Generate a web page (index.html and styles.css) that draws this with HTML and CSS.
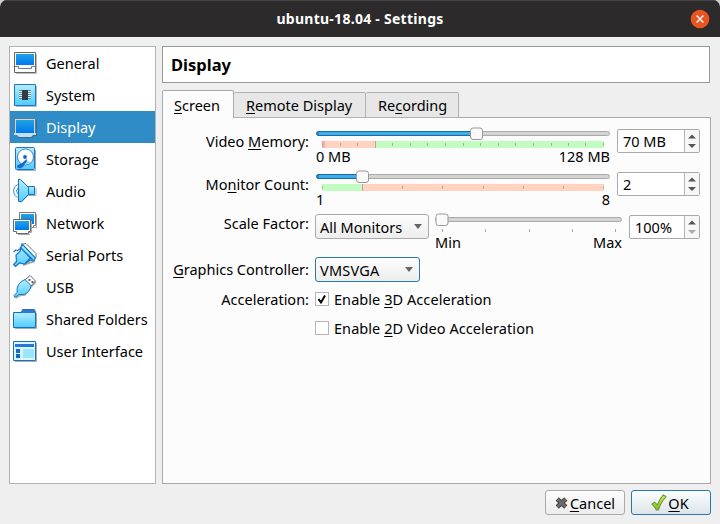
FILE: index.html
```
<!DOCTYPE html>
<html lang="en">
<head>
<meta charset="utf-8">
<title>ubuntu-18.04 - Settings</title>
<link rel="stylesheet" href="styles.css">
</head>
<body>
<svg width="0" height="0" class="defs" aria-hidden="true">
  <defs>
    <linearGradient id="screen" x1="0" y1="0" x2="0" y2="1"><stop offset="0" stop-color="#20a4e2"/><stop offset="1" stop-color="#0077f0"/></linearGradient>
    <linearGradient id="cyan" x1="0" y1="0" x2="0" y2="1"><stop offset="0" stop-color="#b5edff"/><stop offset="1" stop-color="#50cdfc"/></linearGradient>
    <linearGradient id="tick" x1="0" y1="0" x2="0" y2="1"><stop offset="0" stop-color="#d4ee55"/><stop offset="1" stop-color="#83b81b"/></linearGradient>
  </defs>
</svg>
<div class="window">
  <header class="titlebar">
    <h1>ubuntu-18.04 - Settings</h1>
    <svg class="close" width="20" height="20" viewBox="0 0 20 20"><circle cx="10" cy="10" r="9.3" fill="#e95420"/><path d="M6.6 6.6l6.8 6.8M13.4 6.6l-6.8 6.8" stroke="#fff" stroke-width="1.4"/></svg>
  </header>
  <main class="content">
    <nav class="sidebar">
      <a class="item"><svg class="icon" viewBox="0 0 24 24"><path d="M3 22.5h20.5V3" fill="none" stroke="#bbb"/><path d="M1.500 1.500h21v20h-21z" fill="#fff" stroke="#666"/><path d="M3 3h18v11H3z" fill="url(#screen)"/><path d="M2 15.500h3.500v2h13v-2H22" fill="none" stroke="#777"/></svg><span>General</span></a>
      <a class="item"><svg class="icon" viewBox="0 0 24 24"><path d="M3 23.5h20.5V3" fill="none" stroke="#bbb"/><path d="M1.5 1.5h21v21h-21z" fill="url(#cyan)" stroke="#1675cf"/><path d="M6 7.5h12M6 9.500h12M6 11.500h12M6 13.500h12M6 15.500h12" stroke="#4992b5"/><path d="M6 8.500h12M6 10.500h12M6 12.500h12M6 14.500h12" stroke="#e8faff"/><path d="M9 7h6v10H9z" fill="#343a44"/></svg><span>System</span></a>
      <a class="item selected"><svg class="icon" viewBox="0 0 24 24"><path d="M5 22.500h15v-2h3.500V5" fill="none" stroke="#286f9f"/><path d="M1.500 3.500h21v16h-3l-1 2h-13l-1-2h-3z" fill="#b9d9ed" stroke="#607a8d"/><path d="M1 18h22v2h-3l-2 2H6l-2-2H1z" fill="#c3dff0"/><path d="M3 5h18v13H3z" fill="url(#screen)"/></svg><span>Display</span></a>
      <a class="item"><svg class="icon" viewBox="0 0 24 24"><path d="M4 23.5h18.5V3" fill="none" stroke="#aaa"/><rect x="2.5" y=".5" width="19" height="22" rx="1" fill="url(#cyan)" stroke="#1675cf"/><circle cx="12.500" cy="10" r="8" fill="#fff" stroke="#1769bd" stroke-width=".8"/><path d="M12 18l5-2.500-3-2z" fill="#83d9fa"/><circle cx="12" cy="10" r="1.900" fill="#1064ce"/><path d="M13.500 12l.5 2-4 6-3 1.500-3-1 .5-2.500 4-1.500z" fill="#176bd0"/></svg><span>Storage</span></a>
      <a class="item"><svg class="icon" viewBox="0 0 24 24"><path d="M8 23.500l7-7h8V9" fill="none" stroke="#aaa"/><path d="M4.500 5.500Q.5 7 .5 12t4 6.500M5 9Q2 12 5 15" fill="none" stroke="#3190df"/><path d="M5.500.5h2l8 8v7l-7 7h-3z" fill="url(#cyan)" stroke="#1571ce"/><path d="M15.500 7.500h6v8h-6z" fill="url(#cyan)" stroke="#1571ce"/></svg><span>Audio</span></a>
      <a class="item"><svg class="icon" viewBox="0 0 24 24"><path d="M6.500 1.500h16v13h-2v2h-12l-2-3z" fill="#fff" stroke="#777"/><path d="M8 3h13v10H8z" fill="url(#screen)"/><path d="M3 21.500h15.500V10M5 23.500h12M21 16.500h2.500V3" fill="none" stroke="#aaa"/><path d="M.5 8.500h17v12h-2v2h-12v-2h-3z" fill="#fff" stroke="#686868"/><path d="M2 10h14v9H2z" fill="url(#screen)"/></svg><span>Network</span></a>
      <a class="item"><svg class="icon" viewBox="0 0 24 24"><path d="M10 1l3-.5 10 10v4" fill="#fff" stroke="#777"/><path d="M10 22l12-4" stroke="#aaa" stroke-width="2"/><path d="M9 .8L22.500 15l-2 3-3-1-6 4-5-1-4 3.500-2-2 3-3-.5-6.500 4-3.500z" fill="url(#cyan)" stroke="#1975c9" stroke-width="1.200"/><path d="M7 4l13 13M4 8l4-3 9.500 10-5 5M.5 9l3-2.500" fill="none" stroke="#1975c9" stroke-width="1.300"/></svg><span>Serial Ports</span></a>
      <a class="item"><svg class="icon" viewBox="0 0 24 24"><path d="M3 23l4-2.500 5-.5 5-7 6-6" fill="none" stroke="#aaa" stroke-width="1.500"/><path d="M12 5l5-4.500L22.500 6 18 11z" fill="#fff" stroke="#666"/><path d="M15.500 5h2M18.500 7h2" stroke="#333" stroke-width="1.500"/><path d="M12 4.500l6 6q-1 7-7 9H6l-4 3-1-2 3-3Q3 8 12 4.500z" fill="url(#cyan)" stroke="#2178bd"/></svg><span>USB</span></a>
      <a class="item"><svg class="icon" viewBox="0 0 24 24"><path d="M2 21.500h21.500V6" fill="none" stroke="#aaa"/><path d="M8 5l1.500-3h12L23 5v3H8z" fill="#2370c4"/><path d="M.5 5.500h22v15H.5z" fill="url(#cyan)" stroke="#126fc9"/><path d="M9 3h13v3H8z" fill="#2e78d2"/></svg><span>Shared Folders</span></a>
      <a class="item"><svg class="icon" viewBox="0 0 24 24"><path d="M2 22.500h21.500V4" fill="none" stroke="#aaa"/><path d="M.5 2.500h22v19H.5z" fill="#d9f5ff" stroke="#1672c6"/><path d="M2 5h19v3H2z" fill="#2876d2"/><path d="M3 10h4v4H3zM3 15h4v4H3z" fill="#1269cb"/><path d="M10 10h11v9H10z" fill="#9be4fc"/></svg><span>User Interface</span></a>
    </nav>
    <section class="details">
      <h2 class="heading"><span>Display</span></h2>
      <div class="tabs">
        <div class="tab active"><span><u>S</u>creen</span></div>
        <div class="tab remote"><span><u>R</u>emote Display</span></div>
        <div class="tab recording"><span>Re<u>c</u>ording</span></div>
      </div>
      <div class="pane">
        <div class="row memory">
          <label><span>Video <u>M</u>emory:</span></label>
          <div class="range">
            <svg width="294" height="22" viewBox="0 0 294 22">
              <rect x=".5" y="4.500" width="293" height="4" rx="2" fill="#d4d4d4" stroke="#aaa"/><path d="M2 8.500V5.500Q2 4.500 3 4.500H158V8.500H3Q.5 8.500.5 6.500T3 4.500" fill="#3daee9" stroke="#1b6ba4"/>
              <path d="M6 14h53v7H6z" fill="#ffd3c0"/><path d="M59 14h229v7H59z" fill="#c1fcc0"/><path d="M6 14h3v7H6z" fill="#ffaaa0"/>
              <path d="M6.500 16v3M24.500 16v3M41.500 16v3M59.500 14v7M76.500 16v3M94.500 16v3M111.500 16v3M129.500 16v3M147.500 16v3M164.500 16v3M182.500 16v3M199.500 16v3M217.500 16v3M235.500 16v3M252.500 16v3M269.500 16v3M287.500 16v3" stroke="#aaa"/>
              <rect x="154.500" y="1" width="12" height="11.500" rx="2.500" fill="#fafafa" stroke="#999"/>
            </svg>
            <div class="limits"><span>0 MB</span><span>128 MB</span></div>
          </div>
          <div class="spin"><span>70 MB</span><svg class="arrows" viewBox="0 0 14 22"><path d="M3 8.500l4-4 4 4zM3 14l4 4 4-4z" fill="#555"/></svg></div>
        </div>
        <div class="row monitors">
          <label><span>Mo<u>n</u>itor Count:</span></label>
          <div class="range">
            <svg width="294" height="22" viewBox="0 0 294 22">
              <rect x=".5" y="4.500" width="293" height="4" rx="2" fill="#d4d4d4" stroke="#aaa"/><path d="M2 8.500V5.500Q2 4.500 3 4.500H44V8.500H3Q.5 8.500.5 6.500T3 4.500" fill="#3daee9" stroke="#1b6ba4"/>
              <path d="M6 14h40v7H6z" fill="#c1fcc0"/><path d="M46 14h242v7H46z" fill="#ffd3c0"/>
              <path d="M6.500 16v3M46.500 14v7M86.500 16v3M126.500 16v3M167.500 16v3M207.500 16v3M247.500 16v3M287.500 16v3" stroke="#aaa"/>
              <rect x="40.500" y="1" width="12" height="11.500" rx="2.500" fill="#fafafa" stroke="#999"/>
            </svg>
            <div class="limits"><span>1</span><span>8</span></div>
          </div>
          <div class="spin"><span>2</span><svg class="arrows" viewBox="0 0 14 22"><path d="M3 8.500l4-4 4 4zM3 14l4 4 4-4z" fill="#555"/></svg></div>
        </div>
        <div class="row scale">
          <label><span>Scale Factor:</span></label>
          <div class="combo all"><span>All Monitors</span><i></i></div>
          <div class="range">
            <svg width="187" height="22" viewBox="0 0 187 22"><rect x=".5" y="4.500" width="186" height="4" rx="2" fill="#d4d4d4" stroke="#aaa"/><rect x="1" y="1" width="12" height="11.500" rx="2.500" fill="#fafafa" stroke="#999"/><path d="M7.500 16v3M50.500 16v3M94.500 16v3M137.500 16v3M180.500 16v3" stroke="#aaa"/></svg>
            <div class="limits"><span>Min</span><span>Max</span></div>
          </div>
          <div class="spin percent"><span>100%</span><svg class="arrows" viewBox="0 0 14 22"><path d="M3 8.500l4-4 4 4z" fill="#555"/><path d="M3 14l4 4 4-4z" fill="#aaa"/></svg></div>
        </div>
        <div class="row controller">
          <label><span><u>G</u>raphics Controller:</span></label>
          <div class="combo focused"><span>VMSVGA</span><i></i></div>
        </div>
        <div class="row acceleration">
          <label><span>Acceleration:</span></label>
          <div class="check"><svg width="14" height="14" viewBox="0 0 14 14"><rect x=".5" y=".5" width="13" height="13" fill="#fff" stroke="#b5b5b5"/><path d="M3.500 7l2.500 3.500 4-7" fill="none" stroke="#000" stroke-width="2"/></svg><span>Enable <u>3</u>D Acceleration</span></div>
        </div>
        <div class="row video">
          <label></label>
          <div class="check"><svg width="14" height="14" viewBox="0 0 14 14"><rect x=".5" y=".5" width="13" height="13" fill="#fff" stroke="#b5b5b5"/></svg><span>Enable <u>2</u>D Video Acceleration</span></div>
        </div>
      </div>
    </section>
  </main>
  <footer class="actions">
    <button class="cancel"><svg width="13" height="12" viewBox="0 0 13 12"><path d="M2.200 2l8.600 8M10.800 2l-8.600 8" stroke="#444" stroke-width="4.600"/><path d="M2.500 2.300l8 7.400M10.500 2.300l-8 7.400" stroke="#6a6a6a" stroke-width="2.800"/></svg><span><u>C</u>ancel</span></button>
    <button class="ok"><svg width="16" height="17" viewBox="0 0 15 16"><path d="M.8 9.500l2.500-1.800 2.500 2.500Q8 5 11.500.8l2.700 1.700Q9 8 7 15H5Q3.500 12 .8 9.500z" fill="url(#tick)" stroke="#6f9a38"/></svg><span><u>O</u>K</span></button>
  </footer>
</div>
</body>
</html>
```
FILE: styles.css
```
* { box-sizing: border-box; }
body { margin: 0; background: #d0d0d0; color: #000; font: 14.5px/20px "Noto Sans", sans-serif; }
.defs { position: absolute; }
.window { width: 720px; height: 524px; display: flex; flex-direction: column; background: #efefef; border-radius: 7px 7px 0 0; overflow: hidden; }
svg { display: block; flex: none; }
span { white-space: nowrap; }
u { text-decoration-thickness: 1px; text-underline-offset: 2px; text-decoration-skip-ink: none; }
.titlebar { height: 37px; flex: none; display: grid; grid-template-columns: 1fr auto 1fr; align-items: center; background: #2c2a2b; border-top: 1px solid #454344; color: #fff; }
.titlebar h1 { grid-column: 2; margin: 0; font-size: 14px; font-weight: 700; letter-spacing: .27px; }
.close { justify-self: end; margin-right: 10px; }
.content { display: flex; gap: 6px; height: 447px; padding: 9px 9px 0; }
.sidebar { width: 147px; height: 438px; border: 1px solid #b2b2b2; background: #fff; }
.item { display: flex; align-items: center; gap: 9px; height: 32px; padding-left: 3px; }
.icon { width: 24px; height: 24px; }
.selected { background: #308cc6; color: #fff; }
.details { width: 549px; }
.heading { width: 548px; height: 37px; margin: 0; padding: 8px; border: 1px solid #999; background: #fff; font-size: 16.5px; line-height: 20px; }
.tabs { display: flex; align-items: flex-end; height: 35px; margin-bottom: -1px; }
.tab { display: flex; align-items: center; padding-left: 12px; height: 26px; background: #e7e7e7; border: 1px solid #b2b2b2; border-left: 0; border-radius: 2px 2px 0 0; }
.tab.active { width: 72px; height: 28px; padding-left: 11px; border: 1px solid #a9a9a9; border-bottom: 0; background: #fcfcfc; position: relative; }
.remote { width: 132px; }
.recording { width: 93px; }
.pane { height: 367px; padding: 9px 10px; border: 1px solid #a9a9a9; background: #fcfcfc; }
.row { display: flex; align-items: flex-start; }
.row label { width: 136px; margin-right: 7px; display: flex; justify-content: flex-end; }
.memory, .monitors { height: 43px; }
.memory label, .monitors label { padding-top: 4px; }
.limits { display: flex; justify-content: space-between; height: 15px; line-height: 15px; }
.spin { width: 83px; height: 24px; margin: 2px 0 0 7px; padding-left: 5px; display: flex; align-items: center; justify-content: space-between; border: 1px solid #aaa; border-radius: 2px; background: #fff; }
.arrows { width: 15px; height: 22px; border-left: 1px solid #b5b5b5; background: #f7f7f7; }
.scale { height: 44px; }
.scale label { margin-right: 6px; }
.combo { height: 25px; display: flex; align-items: center; justify-content: space-between; padding: 0 6px 0 4px; border: 1px solid #aaa; border-radius: 3px; background: linear-gradient(#fdfdfd, #ededed); }
.combo i { border: 4px solid transparent; border-top: 5px solid #666; border-bottom: 0; }
.all { width: 114px; margin: 1px 6px 0 0; }
.percent { width: 71px; }
.controller { height: 35px; }
.controller label { padding-top: 2px; margin-right: 6px; }
.focused { width: 105px; border-color: #2a79a8; }
.focused span { letter-spacing: .2px; }
.acceleration { height: 29px; }
.acceleration label, .video label { margin-right: 6px; }
.check { display: flex; align-items: center; gap: 5px; height: 14px; letter-spacing: .06px; }
.acceleration label { height: 14px; align-items: center; }
.actions { display: flex; justify-content: flex-end; gap: 6px; padding: 6px 9px 0; }
button { width: 80px; height: 25px; padding: 0; display: flex; align-items: center; justify-content: center; gap: 2px; border: 1px solid #aaa; border-radius: 3px; background: linear-gradient(#fdfdfd, #ececec); color: #000; font: inherit; }
.ok { gap: 1px; padding-right: 2px; border-color: #2878a8; background: linear-gradient(#fbfdfe, #dce5ea); }
```
